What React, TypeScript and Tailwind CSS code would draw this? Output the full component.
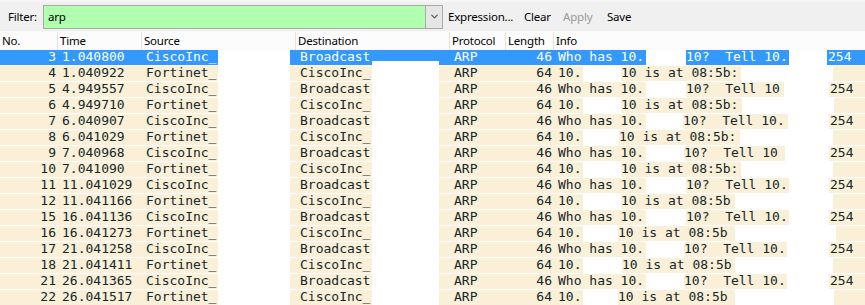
import { ChevronDown } from "lucide-react";

type Row = {
  no: string;
  time: string;
  src: string;
  dst: string;
  len: string;
  kind: "who" | "isat";
  tail: string;
  gaps: [number, number, number, number];
};

// gaps = [start, end, start, end] of the blanked-out bits in the Info column (page x)
const rows: Row[] = [
  { no: "3", time: "1.040800", src: "CiscoInc_", dst: "Broadcast", len: "46", kind: "who", tail: "10?  Tell 10.", gaps: [643, 686, 785, 827] },
  { no: "4", time: "1.040922", src: "Fortinet_", dst: "CiscoInc_", len: "64", kind: "isat", tail: "10 is at 08:5b:", gaps: [581, 621, 741, 833] },
  { no: "5", time: "4.949557", src: "CiscoInc_", dst: "Broadcast", len: "46", kind: "who", tail: "10?  Tell 10", gaps: [641, 686, 784, 829] },
  { no: "6", time: "4.949710", src: "Fortinet_", dst: "CiscoInc_", len: "64", kind: "isat", tail: "10 is at 08:5b:", gaps: [580, 621, 742, 834] },
  { no: "7", time: "6.040907", src: "CiscoInc_", dst: "Broadcast", len: "46", kind: "who", tail: "10?  Tell 10.", gaps: [646, 683, 788, 829] },
  { no: "8", time: "6.041029", src: "Fortinet_", dst: "CiscoInc_", len: "64", kind: "isat", tail: "10 is at 08:5b:", gaps: [581, 619, 740, 833] },
  { no: "9", time: "7.040968", src: "CiscoInc_", dst: "Broadcast", len: "46", kind: "who", tail: "10?  Tell 10", gaps: [644, 684, 785, 829] },
  { no: "10", time: "7.041090", src: "Fortinet_", dst: "CiscoInc_", len: "64", kind: "isat", tail: "10 is at 08:5b:", gaps: [581, 621, 741, 833] },
  { no: "11", time: "11.041029", src: "CiscoInc_", dst: "Broadcast", len: "46", kind: "who", tail: "10?  Tell 10.", gaps: [643, 686, 787, 829] },
  { no: "12", time: "11.041166", src: "Fortinet_", dst: "CiscoInc_", len: "64", kind: "isat", tail: "10 is at 08:5b", gaps: [581, 621, 735, 833] },
  { no: "15", time: "16.041136", src: "CiscoInc_", dst: "Broadcast", len: "46", kind: "who", tail: "10?  Tell 10.", gaps: [643, 686, 787, 829] },
  { no: "16", time: "16.041273", src: "Fortinet_", dst: "CiscoInc_", len: "64", kind: "isat", tail: "10 is at 08:5b", gaps: [580, 618, 735, 836] },
  { no: "17", time: "21.041258", src: "CiscoInc_", dst: "Broadcast", len: "46", kind: "who", tail: "10?  Tell 10.", gaps: [645, 684, 787, 829] },
  { no: "18", time: "21.041411", src: "Fortinet_", dst: "CiscoInc_", len: "64", kind: "isat", tail: "10 is at 08:5b", gaps: [579, 622, 735, 833] },
  { no: "21", time: "26.041365", src: "CiscoInc_", dst: "Broadcast", len: "46", kind: "who", tail: "10?  Tell 10.", gaps: [642, 684, 787, 829] },
  { no: "22", time: "26.041517", src: "Fortinet_", dst: "CiscoInc_", len: "64", kind: "isat", tail: "10 is at 08:5b", gaps: [578, 618, 735, 834] },
];

const INFO_X = 554;
const CH = 7.83; // DejaVu Sans Mono 13px advance

const textW = (s: string) => Math.ceil(s.length * CH) + 1;

const Header = () => (
  <div className="flex h-[18px] bg-[#fcfcfc] text-[11.5px] tracking-[-0.2px] leading-[18px] text-black">
    <div className="w-[58px] pl-[2px] border-r border-[#e3e3e3]">No.</div>
    <div className="w-[84px] pl-[2px] border-r border-[#e3e3e3]">Time</div>
    <div className="w-[154px] pl-[2px] border-r border-[#e3e3e3]">Source</div>
    <div className="w-[154px] pl-[2px] border-r border-[#e3e3e3]">Destination</div>
    <div className="w-[56px] pl-[2px] border-r border-[#e3e3e3]">Protocol</div>
    <div className="w-[48px] pl-[2px] border-r border-[#e3e3e3]">Length</div>
    <div className="flex-1 pl-[2px]">Info</div>
  </div>
);

const PacketRow = ({ row, selected, first }: { row: Row; selected: boolean; first: boolean }) => {
  const [g1s, g1e, g2s, g2e] = row.gaps;
  const head = row.kind === "who" ? "Who has 10." : "10.";
  // keep the text whole, shrink the blank after it if needed
  const seg1 = Math.max(g1s - INFO_X, 4 + textW(head));
  const gap1 = Math.max(g1e - INFO_X - seg1, 0);
  const start2 = INFO_X + seg1 + gap1;
  const seg2 = Math.max(g2s - start2, textW(row.tail));
  const gap2 = Math.max(g2e - start2 - seg2, 0);

  return (
    <div
      className={`flex h-[16px] border-b border-white whitespace-pre ${
        selected ? "bg-[#3399ff] text-white" : "bg-[#faf0d7] text-[#12272e]"
      }`}
    >
      <div className="w-[58px] pr-[2px] text-right">{row.no}</div>
      <div className="w-[84px] pl-[4px]">{row.time}</div>

      {/* Source, blanked after the vendor prefix */}
      <div className="w-[154px] flex">
        <div className="w-[76px] pl-[4px]">{row.src}</div>
        <div className="w-[72px] bg-white" />
      </div>

      {/* Destination */}
      <div className="w-[154px] flex">
        <div className="w-[76px] pl-[4px]">{row.dst}</div>
        {first ? (
          <div className="w-[67px] flex flex-col justify-end">
            <div className="h-[4px] bg-white" />
          </div>
        ) : (
          <div className="w-[67px] bg-white" />
        )}
      </div>

      <div className="w-[56px] pl-[4px]">ARP</div>
      <div className="w-[48px] pr-[2px] text-right">{row.len}</div>

      {/* Info */}
      <div className="flex-1 flex">
        <div className="pl-[4px] shrink-0" style={{ width: seg1 }}>
          {head}
        </div>
        <div className="bg-white shrink-0" style={{ width: gap1 }} />
        <div className="shrink-0" style={{ width: seg2 }}>
          {row.tail}
        </div>
        <div className="bg-white shrink-0" style={{ width: gap2 }} />
        {row.kind === "who" && <div className="pl-[1px]">254</div>}
      </div>
    </div>
  );
};

export default function App() {
  return (
    <div className="w-[865px] h-[305px] overflow-hidden bg-white font-['Noto_Sans',sans-serif]">
      {/* Filter toolbar */}
      <div className="flex items-center h-[32px] bg-[#f0f0f0] border-t-[2px] border-t-[#f6f6f6] border-b border-b-[#f8f8f8] text-[11.5px] tracking-[-0.2px] text-black">
        <div className="w-[35px] ml-[8px]">Filter:</div>
        <div className="flex w-[400px] h-[24px] border border-[#a9a9a9] bg-[#afffaf]">
          <div className="flex-1 pl-[4px] leading-[22px]">arp</div>
          <div className="w-[17px] flex items-center justify-center bg-[#e6e6e6] border-l border-[#a9a9a9]">
            <ChevronDown className="w-[11px] h-[11px] text-[#555]" strokeWidth={2.5} />
          </div>
        </div>
        <div className="w-[76px] ml-[5px]">Expression...</div>
        <div className="w-[39px]">Clear</div>
        <div className="w-[44px] text-[#9a9a9a]">Apply</div>
        <div>Save</div>
      </div>

      <Header />

      <div className="font-['DejaVu_Sans_Mono',monospace] text-[13px] leading-[14px]">
        {rows.map((r, i) => (
          <PacketRow key={r.no} row={r} selected={i === 0} first={i === 0} />
        ))}
      </div>
    </div>
  );
}
